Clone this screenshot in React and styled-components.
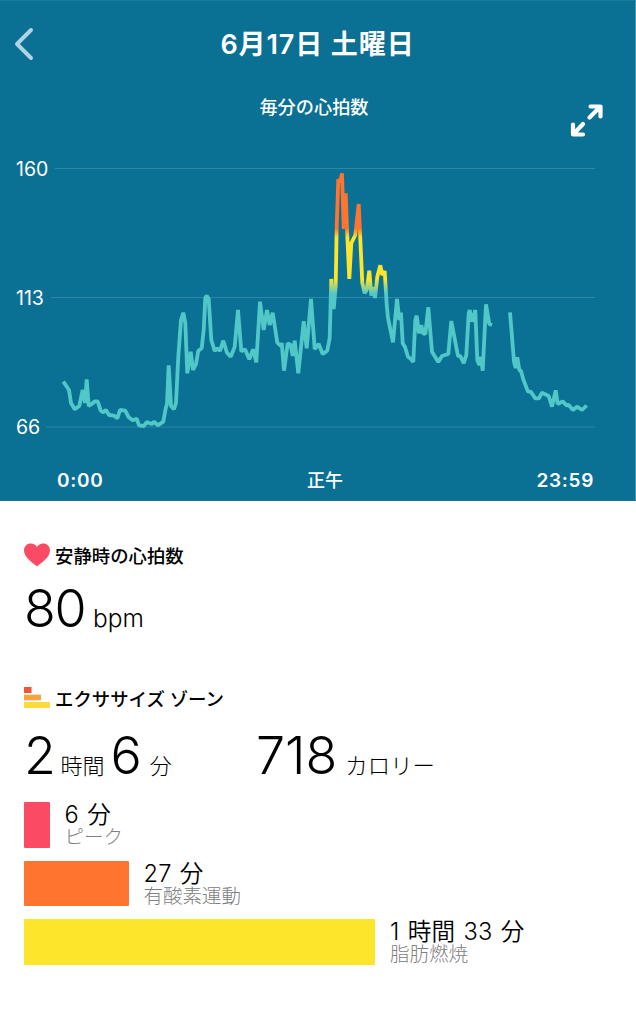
import React from 'react'
import styled, { createGlobalStyle } from 'styled-components'

const GlobalStyle = createGlobalStyle`
  body {
    margin: 0;
    background: #fff;
    font-family: Inter, 'Noto Sans CJK JP', sans-serif;
    color: #000;
  }
`

const Page = styled.main`
  width: 636px;
  height: 1024px;
  overflow: hidden;
  background: #fff;
`

const Panel = styled.section`
  height: 501px;
  box-sizing: border-box;
  border-top: 1px solid #1a7a9d;
  border-right: 1px solid #4a98b3;
  border-bottom: 1px solid #2c6d8c;
  background: #0a7094;
  color: #fff;
`

const NavBar = styled.header`
  display: grid;
  grid-template-columns: 60px 1fr 60px;
  align-items: center;
  height: 86px;
`

const BackIcon = styled.svg`
  width: 20px;
  height: 34px;
  margin-left: 14px;
`

const Title = styled.h1`
  margin: 0;
  padding-top: 2px;
  font-size: 27px;
  font-weight: 600;
  line-height: 40px;
  letter-spacing: 0.9px;
  text-align: center;
  white-space: nowrap;
`

const ChartHeader = styled.div`
  display: grid;
  grid-template-columns: 66px 1fr 73px;
  height: 54px;
`

const ChartTitle = styled.h2`
  grid-column: 2;
  margin: 7px 0 0;
  font-size: 18.2px;
  font-weight: 500;
  line-height: 26px;
  text-align: center;
`

const ExpandIcon = styled.svg`
  width: 36px;
  height: 36px;
  margin: 15px 0 0 6px;
`

const Chart = styled.svg`
  display: block;
  width: 635px;
  height: 320px;
`

const AxisLabel = styled.text`
  fill: #fff;
  font-size: 19.5px;
  font-weight: 400;
`

const TimeAxis = styled.div`
  display: flex;
  justify-content: space-between;
  padding: 1px 41px 0 57px;
  height: 38px;
  font-size: 19px;
  font-weight: 600;
  line-height: 38px;
  letter-spacing: 0.7px;
`

const Noon = styled.span`
  margin-left: 10px;
  font-size: 18px;
  font-weight: 500;
  letter-spacing: 0;
`

const Summary = styled.section`
  padding: 0 24px;
`

const Heading = styled.h3`
  display: flex;
  align-items: center;
  gap: 5px;
  height: 30px;
  margin: ${p => p.top}px 0 0;
  font-size: 18.4px;
  font-weight: 500;
  line-height: 30px;
`

const SectionIcon = styled.svg`
  flex: none;
  width: 26px;
  height: 24px;
  margin-bottom: 2px;
`

const Stats = styled.div`
  display: flex;
  height: 64px;
  margin-top: ${p => p.top}px;
`

const Stat = styled.div`
  display: flex;
  align-items: baseline;
  width: ${p => p.width || 'auto'};
  white-space: pre;
`

const Value = styled.span`
  font-size: 52px;
  font-weight: 290;
  line-height: 64px;
  letter-spacing: ${p => p.tracking || 0}px;
`

const Unit = styled.span`
  margin: 0 ${p => p.after || 0}px 0 ${p => p.before || 8}px;
  font-size: ${p => p.size || 22}px;
  font-weight: 260;
  line-height: 30px;
`

const Zones = styled.div`
  display: grid;
  gap: 13px;
  margin-top: 14px;
`

const Zone = styled.div`
  display: flex;
  gap: 15px;
  height: 45.6px;
`

const ZoneBar = styled.div`
  flex: none;
  width: ${p => p.width}px;
  background: ${p => p.color};
  border-radius: 1px;
`

const ZoneText = styled.div`
  display: flex;
  flex-direction: column;
  white-space: nowrap;
`

const ZoneTime = styled.span`
  height: 25px;
  font-size: 23.6px;
  font-weight: 340;
  line-height: 25px;
  letter-spacing: 0.2px;
  word-spacing: 1.4px;
`

const ZoneName = styled.span`
  height: 21px;
  color: #808080;
  font-size: 19.5px;
  font-weight: 300;
  line-height: 21px;
`

const morning =
  '63.3,381.5 69,390 71,403 74.7,409.3 79.3,406 82.7,390 85,403 86.7,379.3 88.7,406 91.7,404 95,401.3 97.7,401.3 100.7,410.7 103.3,412.3 106,410 109,415 114,415.7 117.3,418.3 120,410 125.3,410.7 128.7,417.3 132.7,420.3 136.7,418.7 139,425.3 144,426 146.7,422 151.7,424 154.3,421.7 157.7,425.3 163.3,421.7 165.7,408.3 167,404 168.7,365.3 171,406 174,409.3 176,403 178.3,356.7 181,320 183.3,312.7 185.3,323 187.3,373.3 190.7,351.7 193,370 196,364 198.3,350.7 201.7,348.3 203.7,330 205.3,298 206.7,295.7 208.7,299 211.3,340 214.7,351 217.3,348.3 220,351 223.3,340.7 227,352.7 230.7,356.7 234.7,346.7 238,310 241.3,351.3 245,349.3 249.3,359.3 253,349.3 256.3,362.3 260,301.7 263.7,330 267,310 269.7,325 272.7,312.7 277.3,342.7 280.7,346 281.7,343 284,370.7 287.7,343.3 290.7,345 292.7,356 294.7,340.7 298.3,373.3 303.7,321.3 306.7,348.3 311,299 314.7,349 318.7,344 322.7,354 327.3,350.7 329.7,338 331.3,279 333.7,309 335.7,286 336.7,227 338.3,179.3 340.3,182 342,173.3 343.7,229 345.7,193.3 347,229 349.3,279 351.3,243.3 355.3,235 358.7,204 362.3,283 364.7,293.3 366.7,290 369.3,270.7 371.3,295.7 373,287 375,298 377.3,276.7 380.3,265.3 382.3,275 384.7,271 386.7,305 388,318 393,342.3 397,299 399.3,320 401,312.7 402.7,343.3 405,347 408,356.7 410.7,358.7 413.3,362 415.3,320 416.7,315.7 419,333.3 421.3,325 423,333.5 425.3,334 428.3,307.3 432,351.7 435,356.7 438.3,362 442,356 448.3,354 451.3,321 458,356 460.3,356 463.7,363.3 466.3,355 468.7,313.3 469.7,310 472,321.7 475.3,310 477.3,360 479.3,365 481,357 482.7,370.7 486,304.3 489.3,324 492,325'

const evening =
  '510,312.3 514,361.7 515.7,368 517.3,357.3 519.3,370 521,371 523.3,379.3 528,391.7 530.7,391.7 535.3,398.3 539,398.3 542,392.7 548.7,396 552,406.7 555.7,390.3 557.7,404 562.7,401.3 566.3,405.3 568.7,405 573,410 577,406.7 582,410 586.7,405.5'

const ticks = [
  { label: '160', y: 168.5, x: 55 },
  { label: '113', y: 297.5, x: 51 },
  { label: '66', y: 427, x: 46 },
]

const HeartRateChart = () => (
  <Chart viewBox="0 141 635 320">
    <defs>
      <linearGradient id="zones" gradientUnits="userSpaceOnUse" x1="0" y1="170" x2="0" y2="430">
        <stop offset="0.225" stopColor="#ff752f" />
        <stop offset="0.26" stopColor="#fee52b" />
        <stop offset="0.42" stopColor="#fee52b" />
        <stop offset="0.475" stopColor="#52c7c7" />
      </linearGradient>
    </defs>
    {ticks.map(t => (
      <g key={t.label}>
        <AxisLabel x="16" y={t.y + 7}>
          {t.label}
        </AxisLabel>
        <line x1={t.x} x2="595" y1={t.y} y2={t.y} stroke="#2f86a7" strokeWidth="1" />
      </g>
    ))}
    <g fill="none" stroke="url(#zones)" strokeWidth="3.8" strokeLinejoin="bevel">
      <polyline points={morning} />
      <polyline points={evening} />
    </g>
  </Chart>
)

const zones = [
  { time: '6 分', name: 'ピーク', width: 25.5, color: '#fb4b64' },
  { time: '27 分', name: '有酸素運動', width: 104.5, color: '#ff752f' },
  { time: '1 時間 33 分', name: '脂肪燃焼', width: 351, color: '#fde52b' },
]

const App = () => {
  return (
    <Page>
      <GlobalStyle />
      <Panel>
        <NavBar>
          <BackIcon viewBox="0 0 20 34" fill="none">
            <path d="M17 3 3 17 17 31" stroke="#b1d4e2" strokeWidth="3.9" strokeLinecap="round" strokeLinejoin="round" />
          </BackIcon>
          <Title>6月17日 土曜日</Title>
        </NavBar>
        <ChartHeader>
          <ChartTitle>毎分の心拍数</ChartTitle>
          <ExpandIcon viewBox="0 0 36 36" fill="none" stroke="#fff" strokeWidth="4.2" strokeLinecap="round" strokeLinejoin="round">
            <path d="M21.5 15.5 32 5M22.5 4.5H32.5V14.5M15 22 5.5 32M5 22.5V32.5H15" />
          </ExpandIcon>
        </ChartHeader>
        <HeartRateChart />
        <TimeAxis>
          <span>0:00</span>
          <Noon>正午</Noon>
          <span>23:59</span>
        </TimeAxis>
      </Panel>

      <Summary>
        <Heading top={40}>
          <SectionIcon viewBox="0 0 26 24">
            <path
              d="M13 23.5C9 20 0 14.5 0 7.5 0 3.2 3 .5 6.8.5 9.5.5 11.8 1.8 13 4 14.2 1.8 16.5.5 19.2.5 23 .5 26 3.2 26 7.5 26 14.5 17 20 13 23.5Z"
              fill="#fb4b64"
            />
          </SectionIcon>
          安静時の心拍数
        </Heading>
        <Stats top={6}>
          <Stat>
            <Value tracking={-1.4}>80</Value>
            <Unit size={24.5}>bpm</Unit>
          </Stat>
        </Stats>

        <Heading top={43}>
          <SectionIcon viewBox="0 0 26 24">
            <path d="M0 1h7.5v6H0z" fill="#f45336" />
            <path d="M0 8.7h17v5.6H0z" fill="#f8a43a" />
            <path d="M0 16h26v6H0z" fill="#fddb3c" />
          </SectionIcon>
          エクササイズ ゾーン
        </Heading>
        <Stats top={10}>
          <Stat width="232px">
            <Value tracking={-1.5}>2</Value>
            <Unit before={6} after={6}>
              時間
            </Unit>
            <Value tracking={-1}>6</Value>
            <Unit before={9}>分</Unit>
          </Stat>
          <Stat>
            <Value>718</Value>
            <Unit size={22.4}>カロリー</Unit>
          </Stat>
        </Stats>

        <Zones>
          {zones.map(z => (
            <Zone key={z.name}>
              <ZoneBar width={z.width} color={z.color} />
              <ZoneText>
                <ZoneTime>{z.time}</ZoneTime>
                <ZoneName>{z.name}</ZoneName>
              </ZoneText>
            </Zone>
          ))}
        </Zones>
      </Summary>
    </Page>
  )
}

export default App
